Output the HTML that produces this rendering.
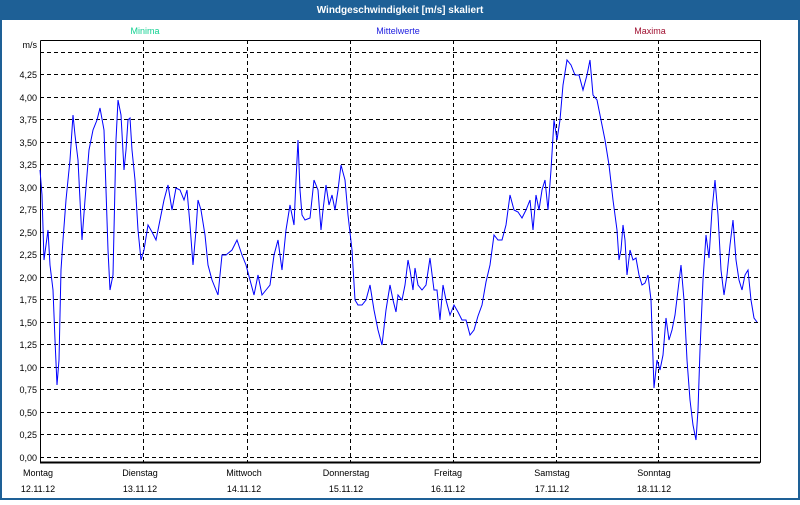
<!DOCTYPE html>
<html><head><meta charset="utf-8"><style>
body{margin:0;width:800px;height:500px;overflow:hidden;background:#fff;font-family:"Liberation Sans",sans-serif;}
</style></head><body>
<svg width="800" height="500" xmlns="http://www.w3.org/2000/svg" font-family="Liberation Sans, sans-serif" font-size="9">
<rect x="0" y="0" width="800" height="500" fill="#1e6096"/>
<rect x="2" y="20" width="796" height="478" fill="#fff"/>
<text x="400" y="13" text-anchor="middle" fill="#fff" font-weight="bold" font-size="10">Windgeschwindigkeit [m/s] skaliert</text>
<text x="145" y="34" text-anchor="middle" fill="#10d090">Minima</text>
<text x="398" y="34" text-anchor="middle" fill="#2020e0">Mittelwerte</text>
<text x="650" y="34" text-anchor="middle" fill="#a01030">Maxima</text>
<g stroke="#000" stroke-dasharray="4,3" stroke-width="1">
<line x1="40" y1="52.5" x2="760" y2="52.5"/>
<line x1="40" y1="74.5" x2="760" y2="74.5"/>
<line x1="40" y1="97.5" x2="760" y2="97.5"/>
<line x1="40" y1="119.5" x2="760" y2="119.5"/>
<line x1="40" y1="142.5" x2="760" y2="142.5"/>
<line x1="40" y1="164.5" x2="760" y2="164.5"/>
<line x1="40" y1="187.5" x2="760" y2="187.5"/>
<line x1="40" y1="209.5" x2="760" y2="209.5"/>
<line x1="40" y1="232.5" x2="760" y2="232.5"/>
<line x1="40" y1="254.5" x2="760" y2="254.5"/>
<line x1="40" y1="277.5" x2="760" y2="277.5"/>
<line x1="40" y1="299.5" x2="760" y2="299.5"/>
<line x1="40" y1="322.5" x2="760" y2="322.5"/>
<line x1="40" y1="344.5" x2="760" y2="344.5"/>
<line x1="40" y1="367.5" x2="760" y2="367.5"/>
<line x1="40" y1="389.5" x2="760" y2="389.5"/>
<line x1="40" y1="412.5" x2="760" y2="412.5"/>
<line x1="40" y1="434.5" x2="760" y2="434.5"/>
<line x1="40" y1="457.5" x2="760" y2="457.5"/>
<line x1="143.5" y1="40" x2="143.5" y2="462"/>
<line x1="247.5" y1="40" x2="247.5" y2="462"/>
<line x1="350.5" y1="40" x2="350.5" y2="462"/>
<line x1="453.5" y1="40" x2="453.5" y2="462"/>
<line x1="556.5" y1="40" x2="556.5" y2="462"/>
<line x1="658.5" y1="40" x2="658.5" y2="462"/>
</g>
<path d="M40.5 40.5H760.5V462.5M40.5 40.5V462.5H760.5" fill="none" stroke="#000" stroke-width="1"/>
<line x1="40" y1="462.5" x2="760" y2="462.5" stroke="#000" stroke-width="2"/>
<g text-anchor="end" fill="#000">
<text x="37" y="48">m/s</text>
<text x="37" y="78">4,25</text><text x="37" y="101">4,00</text><text x="37" y="123">3,75</text><text x="37" y="146">3,50</text>
<text x="37" y="168">3,25</text><text x="37" y="191">3,00</text><text x="37" y="213">2,75</text><text x="37" y="236">2,50</text>
<text x="37" y="258">2,25</text><text x="37" y="281">2,00</text><text x="37" y="303">1,75</text><text x="37" y="326">1,50</text>
<text x="37" y="348">1,25</text><text x="37" y="371">1,00</text><text x="37" y="393">0,75</text><text x="37" y="416">0,50</text>
<text x="37" y="438">0,25</text><text x="37" y="461">0,00</text>
</g>
<g text-anchor="middle" fill="#000">
<text x="38" y="476">Montag</text><text x="38" y="492">12.11.12</text>
<text x="140" y="476">Dienstag</text><text x="140" y="492">13.11.12</text>
<text x="244" y="476">Mittwoch</text><text x="244" y="492">14.11.12</text>
<text x="346" y="476">Donnerstag</text><text x="346" y="492">15.11.12</text>
<text x="448" y="476">Freitag</text><text x="448" y="492">16.11.12</text>
<text x="552" y="476">Samstag</text><text x="552" y="492">17.11.12</text>
<text x="654" y="476">Sonntag</text><text x="654" y="492">18.11.12</text>
</g>
<polyline fill="none" stroke="#0000ff" stroke-width="1" points="40,170 42,195 44,260 46,245 48,230 50,265 53,290 55,340 57,385 59,360 61,270 63,240 66,200 70,160 73,115 75,135 78,160 82,240 85,200 89,150 93,130 97,120 100,108 104,130 108,250 110,290 113,275 116,140 118,100 121,115 124,170 126,150 128,120 130,118 132,150 135,180 138,230 141,260 144,250 148,225 152,232 156,240 160,220 164,200 168,185 172,210 176,188 180,190 184,200 187,190 190,225 193,265 196,230 198,200 201,210 205,235 208,265 212,280 218,295 222,255 226,255 232,250 237,240 242,255 246,265 250,280 254,295 258,275 262,295 266,290 270,285 274,255 278,240 282,270 286,230 290,205 294,225 296,180 298,140 300,190 302,215 305,220 310,218 314,180 318,190 321,230 323,210 326,185 329,205 332,195 335,210 338,190 341,165 345,180 348,215 352,250 355,300 358,305 362,305 366,300 370,285 374,310 378,330 382,345 386,310 390,285 393,300 396,312 398,295 402,300 405,285 408,260 410,270 413,290 415,268 418,285 422,290 426,285 430,258 434,290 437,290 440,320 443,285 446,300 450,315 454,305 458,312 462,320 466,320 470,335 474,330 478,316 482,305 486,282 490,265 494,235 498,240 502,240 506,225 510,195 514,210 518,212 522,218 526,210 530,200 533,230 536,195 539,210 542,190 545,180 548,210 551,170 554,120 557,140 560,120 563,85 567,60 571,65 575,75 579,75 583,90 587,75 590,60 593,95 597,100 601,120 605,140 609,165 613,200 617,230 619,260 621,250 623,225 625,240 627,275 630,250 633,260 636,258 639,275 642,285 645,283 648,275 651,300 654,388 657,360 660,370 663,355 666,318 669,340 672,330 675,315 678,290 681,265 684,300 687,360 690,400 693,425 696,440 698,410 700,350 703,280 706,235 709,258 712,210 715,180 718,215 721,270 724,295 727,275 730,245 733,220 736,260 739,280 742,290 745,275 748,270 751,300 754,318 757,322"/>
</svg>
</body></html>
